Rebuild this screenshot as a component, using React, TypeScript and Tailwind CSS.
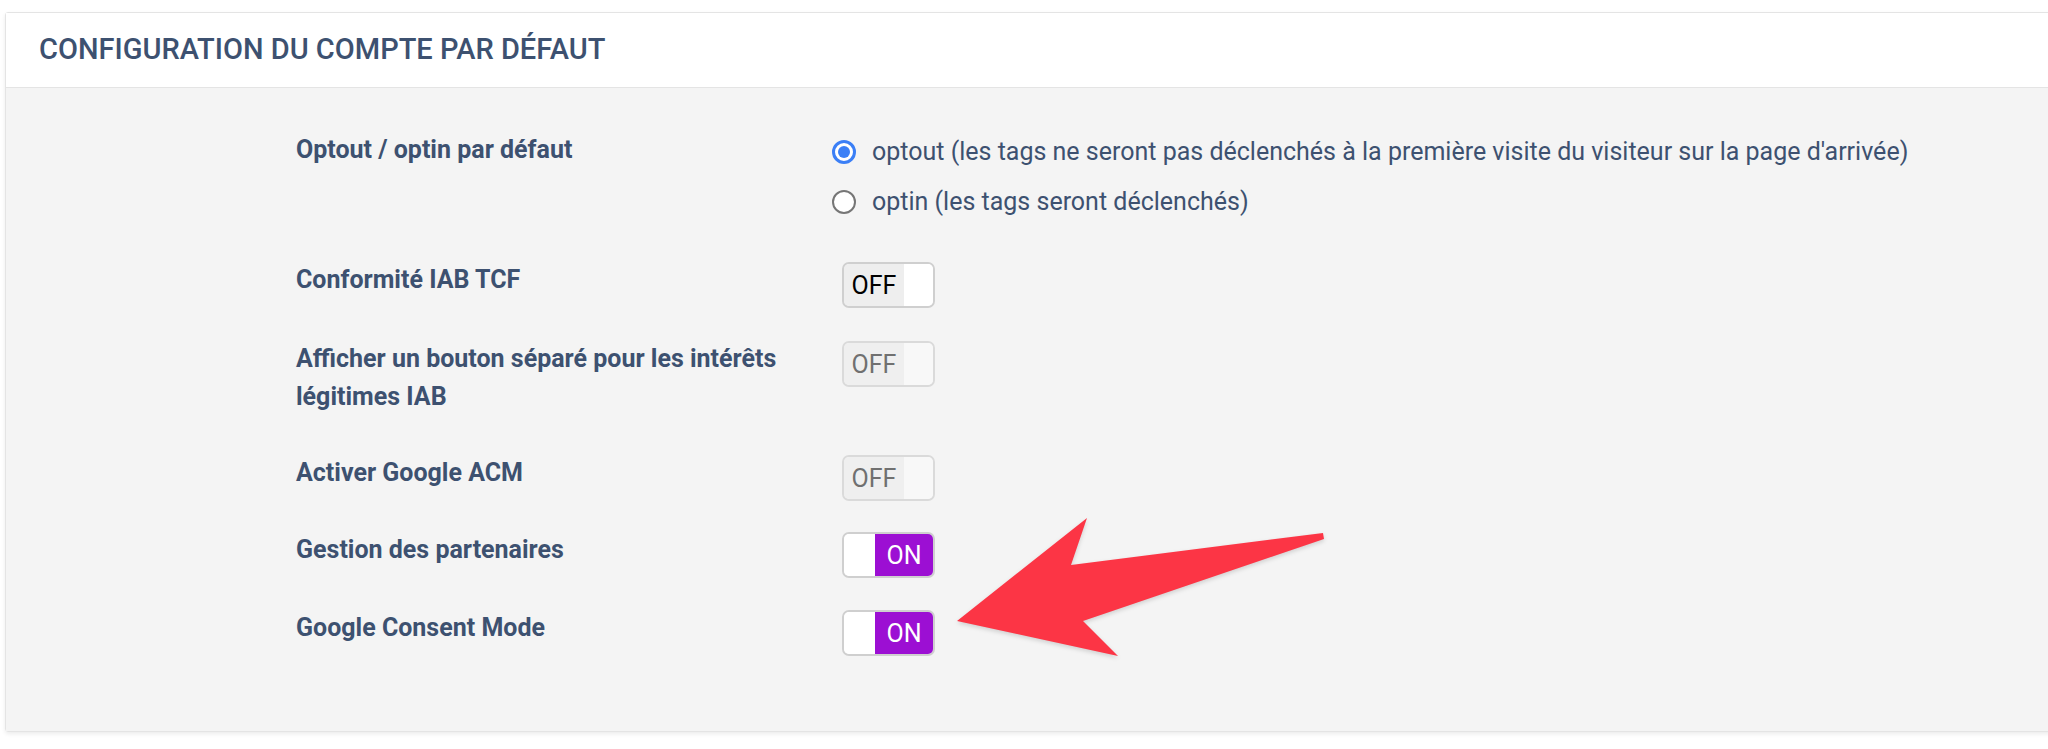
import React from 'react';

type ToggleProps = { on: boolean; disabled?: boolean };

const Toggle: React.FC<ToggleProps> = ({ on, disabled }) => {
    if (on) {
        return (
            <div className="flex w-[93px] h-[46px] rounded-[7px] border-2 border-[#cfcfcf] overflow-hidden">
                <div className="w-[31px] bg-white"></div>
                <div className="flex-1 bg-[#9c0fd3] flex items-center justify-center text-white text-[25px] leading-none">ON</div>
            </div>
        );
    }
    return (
        <div className={`flex w-[93px] h-[46px] rounded-[7px] border-2 overflow-hidden ${disabled ? 'border-[#dadada]' : 'border-[#cfcfcf]'}`}>
            <div className={`flex-1 flex items-center justify-center text-[25px] leading-none ${disabled ? 'bg-[#efefef] text-[#707070]' : 'bg-[#eeeeee] text-black'}`}>OFF</div>
            <div className={`w-[29px] ${disabled ? 'bg-[#f8f8f8]' : 'bg-white'}`}></div>
        </div>
    );
};

const Radio: React.FC<{ checked: boolean; label: string }> = ({ checked, label }) => (
    <div className="flex items-center h-[38px]">
        {checked ? (
            <div className="w-[24px] h-[24px] rounded-full border-[3px] border-[#3b7ff6] bg-white flex items-center justify-center ml-[-10px]">
                <div className="w-[12px] h-[12px] rounded-full bg-[#3b7ff6]"></div>
            </div>
        ) : (
            <div className="w-[24px] h-[24px] rounded-full border-2 border-[#767676] bg-white ml-[-10px]"></div>
        )}
        <span className="ml-[16px] text-[25px] text-[#3d5170]">{label}</span>
    </div>
);

const Row: React.FC<{ label: React.ReactNode; children: React.ReactNode; className?: string }> = ({ label, children, className }) => (
    <div className={`flex items-start ${className ?? ''}`}>
        <div className="w-[546px] pr-[30px] text-[25px] leading-[38px] font-bold text-[#3d5170] mt-[-1px]">{label}</div>
        <div>{children}</div>
    </div>
);

const App: React.FC = () => {
    return (
        <div className="relative w-[2048px] h-[749px] bg-white overflow-hidden font-['Roboto',sans-serif]">
            <div className="pt-[12px] pl-[5px]">
                <div className="w-[2070px] border border-[#e4e4e4] rounded-[3px] shadow-[0_2px_4px_rgba(0,0,0,0.08)]">
                    <header className="h-[75px] bg-white border-b border-[#e4e4e4] flex items-center pl-[33px]">
                        <h2 className="text-[29px] font-medium uppercase text-[#3d5170]">Configuration du compte par défaut</h2>
                    </header>

                    <div className="bg-[#f4f4f4] pt-[44px] pb-[75px] pl-[290px]">
                        <Row label="Optout / optin par défaut" className="mb-[41px]">
                            <div className="flex flex-col gap-[12px] mt-[1px]">
                                <Radio checked label="optout (les tags ne seront pas déclenchés à la première visite du visiteur sur la page d'arrivée)" />
                                <Radio checked={false} label="optin (les tags seront déclenchés)" />
                            </div>
                        </Row>
                        <Row label="Conformité IAB TCF" className="mb-[33px]">
                            <Toggle on={false} />
                        </Row>
                        <Row label="Afficher un bouton séparé pour les intérêts légitimes IAB" className="mb-[39px]">
                            <Toggle on={false} disabled />
                        </Row>
                        <Row label="Activer Google ACM" className="mb-[31px]">
                            <Toggle on={false} disabled />
                        </Row>
                        <Row label="Gestion des partenaires" className="mb-[32px]">
                            <Toggle on />
                        </Row>
                        <Row label="Google Consent Mode">
                            <Toggle on />
                        </Row>
                    </div>
                </div>
            </div>

            {/* annotation arrow over the page */}
            <svg className="absolute left-0 top-0 pointer-events-none drop-shadow-[0_2px_2px_rgba(0,0,0,0.15)]" width="2048" height="749" viewBox="0 0 2048 749">
                <polygon
                    points="957,621 1087,518 1071,565 1323,533 1324,539 1083,621 1118,656"
                    fill="#fc3545"
                />
            </svg>
        </div>
    );
};

export default App;
